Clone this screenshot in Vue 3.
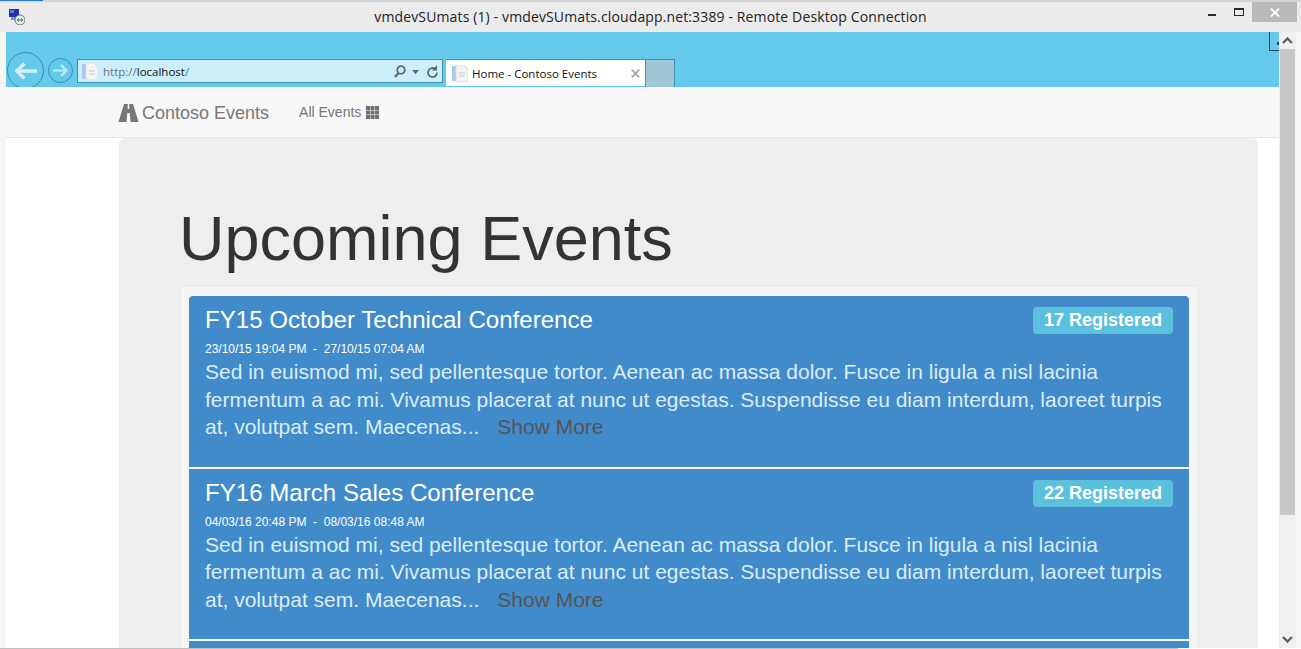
<script setup>
const events = [
  { id: 1, title: 'FY15 October Technical Conference', registered: 17, start: '23/10/15 19:04 PM', end: '27/10/15 07:04 AM' },
  { id: 2, title: 'FY16 March Sales Conference', registered: 22, start: '04/03/16 20:48 PM', end: '08/03/16 08:48 AM' },
  { id: 3, title: '', registered: null, start: '', end: '' }
]
const blurb = 'Sed in euismod mi, sed pellentesque tortor. Aenean ac massa dolor. Fusce in ligula a nisl lacinia fermentum a ac mi. Vivamus placerat at nunc ut egestas. Suspendisse eu diam interdum, laoreet turpis at, volutpat sem. Maecenas...'
</script>

<template>
  <div class="window">
    <div class="topline"><span class="topline-blue"></span></div>

    <div class="titlebar">
      <svg class="rdp-icon" width="16" height="16" viewBox="0 0 16 16">
        <rect x="0" y="0" width="10" height="8" fill="#2030b0" />
        <rect x="1" y="1" width="4" height="3" fill="#5a7ae0" />
        <rect x="2" y="8" width="8" height="3" fill="#8890a8" />
        <circle cx="11" cy="11" r="5" fill="#e8e8e8" stroke="#777" />
        <path d="M8.500 11h5M9.500 9.500l-1 1.500 1 1.500M12.500 9.500l1 1.500-1 1.500" stroke="#1c8a2c" fill="none" />
      </svg>
      <div class="title-text">vmdevSUmats (1) - vmdevSUmats.cloudapp.net:3389 - Remote Desktop Connection</div>
      <div class="win-controls">
        <span class="ctl-min"></span>
        <span class="ctl-max"></span>
        <span class="ctl-close">
          <svg width="10" height="9" viewBox="0 0 10 9"><path d="M1 .5l8 8M9 .5l-8 8" stroke="#fff" stroke-width="1.800" /></svg>
        </span>
      </div>
    </div>

    <div class="client">
      <div class="viewport">
        <div class="chrome">
          <span class="corner-mark"></span>
          <div class="nav-btns">
            <div class="nav-back">
              <svg width="23" height="18" viewBox="0 0 23 18"><path d="M10.500 1.500L3 9l7.500 7.500M3 9h20" stroke="#d3eff9" stroke-width="3.600" fill="none" /></svg>
            </div>
            <div class="nav-forward">
              <svg width="15" height="13" viewBox="0 0 15 13"><path d="M8 1l5.500 5.500L8 12M13 6.500H0" stroke="#c4e8f5" stroke-width="2.200" fill="none" /></svg>
            </div>
          </div>
          <div class="address">
            <svg class="page-icon" width="16" height="17" viewBox="0 0 16 17">
              <rect x="0" y="1" width="5" height="15" fill="#a9c8ec" />
              <path d="M4 0h8l4 4v13H4z" fill="#f4f4f4" stroke="#d6d6d6" />
              <path d="M7 8h6M7 11h6" stroke="#c8c8c8" />
            </svg>
            <span class="url"><span class="dim">http://</span>localhost<span class="dim">/</span></span>
            <svg class="addr-tool" width="45" height="13" viewBox="0 0 45 13">
              <circle cx="7" cy="5" r="3.800" fill="none" stroke="#5b6a72" stroke-width="1.800" />
              <path d="M4.500 8l-3.500 4" stroke="#5b6a72" stroke-width="2.200" />
              <path d="M18 5h7l-3.500 4z" fill="#5b6a72" />
              <path d="M43 7.500a4.500 4.500 0 1 1-2-3.700" fill="none" stroke="#5b6a72" stroke-width="1.800" />
              <path d="M43 0v5.500h-5z" fill="#5b6a72" />
            </svg>
          </div>
          <div class="tab">
            <svg class="page-icon" width="16" height="17" viewBox="0 0 16 17">
              <rect x="0" y="1" width="5" height="15" fill="#a9c8ec" />
              <path d="M4 0h8l4 4v13H4z" fill="#f4f4f4" stroke="#d6d6d6" />
              <path d="M7 8h6M7 11h6" stroke="#c8c8c8" />
            </svg>
            <span class="tab-label">Home - Contoso Events</span>
            <svg class="tab-close" width="9" height="9" viewBox="0 0 9 9"><path d="M.7.7l7.600 7.600M8.300.7L.7 8.300" stroke="#a8a8a8" stroke-width="1.800" /></svg>
          </div>
          <div class="new-tab"></div>
        </div>

        <nav class="navbar">
          <a class="brand">
            <svg width="21" height="18" viewBox="0 0 20 18">
              <path fill-rule="evenodd" d="M5.500 0H14.500L20 18H0zM9.300 0L9.100 5H10.900L10.700 0zM8.800 9L8 18H12L11.200 9z" fill="#777" />
            </svg>
            <span>Contoso Events</span>
          </a>
          <a class="nav-link">
            <span>All Events</span>
            <svg width="13" height="13" viewBox="0 0 13 13" fill="#6f6f6f">
              <rect x="0" y="0" width="4" height="4" /><rect x="4.500" y="0" width="4" height="4" /><rect x="9" y="0" width="4" height="4" />
              <rect x="0" y="4.500" width="4" height="4" /><rect x="4.500" y="4.500" width="4" height="4" /><rect x="9" y="4.500" width="4" height="4" />
              <rect x="0" y="9" width="4" height="4" /><rect x="4.500" y="9" width="4" height="4" /><rect x="9" y="9" width="4" height="4" />
            </svg>
          </a>
        </nav>

        <main class="page">
          <section class="jumbotron">
            <h1>Upcoming Events</h1>
            <div class="well">
              <article v-for="ev in events" :key="ev.id" class="event">
                <template v-if="ev.title">
                  <div class="event-head">
                    <h3>{{ ev.title }}</h3>
                    <span class="badge">{{ ev.registered }} Registered</span>
                  </div>
                  <div class="dates">{{ ev.start }}&nbsp; - &nbsp;{{ ev.end }}</div>
                  <p class="blurb">{{ blurb }}<a class="more">Show More</a></p>
                </template>
              </article>
            </div>
          </section>
        </main>
      </div>

      <div class="scrollbar">
        <div class="scroll-btn">
          <svg width="11" height="7" viewBox="0 0 11 7"><path d="M1 6l4.500-4.500L10 6" stroke="#606060" stroke-width="2.400" fill="none" /></svg>
        </div>
        <div class="scroll-thumb"></div>
        <div class="scroll-rest"></div>
        <div class="scroll-btn">
          <svg width="11" height="7" viewBox="0 0 11 7"><path d="M1 1l4.500 4.500L10 1" stroke="#606060" stroke-width="2.400" fill="none" /></svg>
        </div>
      </div>
    </div>

    <div class="bottomline"><span class="bottomline-grey"></span></div>
  </div>
</template>

<style>
html, body { margin: 0; padding: 0; overflow: hidden; }
</style>

<style scoped>
.window {
  width: 1301px;
  height: 649px;
  display: flex;
  flex-direction: column;
  background: #f6f6f6;
  overflow: hidden;
  font-family: "Liberation Sans", Arial, sans-serif;
}

.topline {
  height: 2px;
  flex: none;
  background: #d4d4d4;
}
.topline-blue {
  display: block;
  width: 43px;
  height: 1px;
  background: #2b7cd3;
}

.titlebar {
  height: 30px;
  flex: none;
  display: flex;
  align-items: center;
  position: relative;
  background: #ebebeb;
}
.rdp-icon {
  margin-left: 9px;
  flex: none;
}
.title-text {
  position: absolute;
  left: 0;
  right: 0;
  top: 5px;
  text-align: center;
  font-family: "Open Sans", "Noto Sans", sans-serif;
  font-size: 14px;
  letter-spacing: 0.13px;
  line-height: 20px;
  color: #222;
}
.win-controls {
  margin-left: auto;
  margin-right: 4px;
  display: flex;
  align-items: flex-start;
  align-self: flex-start;
}
.ctl-min {
  width: 8px;
  height: 2px;
  background: #2a2a2a;
  margin: 12px 18px 0 0;
}
.ctl-max {
  width: 8px;
  height: 5px;
  border: 1px solid #2a2a2a;
  border-top-width: 2px;
  margin: 6px 8px 0 0;
}
.ctl-close {
  width: 45px;
  height: 20px;
  background: #b9b9b9;
  display: flex;
  align-items: center;
  justify-content: center;
}

.client {
  flex: 1;
  min-height: 0;
  display: flex;
  margin: 0 5px 0 6px;
  background: #fff;
}
.viewport {
  flex: 1;
  min-width: 0;
  display: flex;
  flex-direction: column;
}

.chrome {
  height: 55px;
  flex: none;
  background: #64c9eb;
  display: flex;
  align-items: flex-end;
  position: relative;
  overflow: hidden;
}
.corner-mark {
  position: absolute;
  top: 0;
  right: 0;
  width: 9px;
  height: 18px;
  border-left: 1px solid #27435a;
  border-bottom: 1px solid #27435a;
}
.corner-mark::after {
  content: "";
  position: absolute;
  right: 0;
  top: 10px;
  width: 2px;
  height: 3px;
  background: #27435a;
}
.nav-btns {
  display: flex;
  align-items: center;
  height: 37px;
  margin: 0 4px -2px 1px;
  gap: 4px;
}
.nav-back {
  width: 35px;
  height: 35px;
  border: 1px solid #3a8ea8;
  border-radius: 50%;
  display: flex;
  align-items: center;
  justify-content: center;
}
.nav-forward {
  width: 23px;
  height: 23px;
  border: 1px solid #3a8ea8;
  border-radius: 50%;
  display: flex;
  align-items: center;
  justify-content: center;
  margin-top: -1px;
}
.address {
  width: 366px;
  height: 24px;
  box-sizing: border-box;
  border: 1px solid #3f93ad;
  background: #cbeef9;
  display: flex;
  align-items: center;
  margin-bottom: 4px;
  padding: 0 3px 0 4px;
}
.page-icon {
  flex: none;
}
.url {
  margin-left: 5px;
  font-family: "Open Sans", "Noto Sans", sans-serif;
  font-size: 11.5px;
  color: #111;
}
.dim {
  color: #66757c;
}
.addr-tool {
  margin-left: auto;
}
.tab {
  width: 199px;
  height: 28px;
  box-sizing: border-box;
  margin-left: 3px;
  background: #fff;
  border-bottom: 1px solid #64c9eb;
  border-top: 1px solid #3f93ad;
  display: flex;
  align-items: center;
  padding: 0 5px 0 6px;
}
.tab-label {
  margin-left: 4px;
  font-family: "Open Sans", "Noto Sans", sans-serif;
  font-size: 11.5px;
  color: #111;
}
.tab-close {
  margin-left: auto;
}
.new-tab {
  width: 30px;
  height: 28px;
  box-sizing: border-box;
  background: #a0c5d5;
  border: 1px solid #3f93ad;
  border-bottom: 0;
}

.navbar {
  height: 51px;
  flex: none;
  box-sizing: border-box;
  background: #f8f8f8;
  border-bottom: 1px solid #e7e7e7;
  display: flex;
  align-items: center;
  padding-left: 112px;
}
.brand {
  display: flex;
  align-items: center;
  gap: 3px;
  font-size: 18px;
  color: #777;
  margin-top: 2px;
}
.nav-link {
  display: flex;
  align-items: center;
  gap: 5px;
  margin-left: 30px;
  font-size: 14px;
  color: #777;
}

.page {
  flex: 1;
  min-height: 0;
  overflow: hidden;
  background: #fff;
  padding-left: 113px;
}
.jumbotron {
  width: 1139px;
  min-height: 100%;
  box-sizing: border-box;
  background: #eee;
  border-radius: 6px;
  padding: 0 59px 0 61px;
}
h1 {
  margin: 0 0 12px -1px;
  padding-top: 66px;
  font-size: 63px;
  font-weight: 400;
  line-height: 69px;
  color: #333;
}
.well {
  background: #f5f5f5;
  border: 1px solid #e8e8e8;
  border-radius: 4px;
  padding: 10px 9px 0 8px;
  box-shadow: inset 0 1px 1px rgba(0, 0, 0, 0.05);
}
.event {
  height: 170.5px;
  box-sizing: border-box;
  background: #428bca;
  padding: 11px 16px 0;
  margin-bottom: 2px;
  border-radius: 4px 4px 0 0;
  box-shadow: 0 2px 0 #fff;
}
.event + .event {
  border-radius: 0;
}
.event-head {
  display: flex;
  justify-content: space-between;
  align-items: flex-start;
}
h3 {
  margin: 0;
  font-size: 24.1px;
  font-weight: 400;
  line-height: 26px;
  color: #fff;
}
.badge {
  box-sizing: border-box;
  height: 27px;
  width: 140px;
  text-align: center;
  background: #5bc0de;
  border-radius: 4px;
  font-size: 18px;
  font-weight: 700;
  line-height: 26px;
  color: #fff;
}
.dates {
  margin-top: 7px;
  font-size: 12px;
  line-height: 16px;
  color: #fff;
}
.blurb {
  margin: 1px 0 0;
  font-size: 21px;
  line-height: 27.5px;
  color: #d9edf7;
}
.more {
  margin-left: 18px;
  color: #555;
}

.scrollbar {
  width: 17px;
  flex: none;
  background: #f0f0f0;
  display: flex;
  flex-direction: column;
}
.scroll-btn {
  height: 17px;
  flex: none;
  display: flex;
  align-items: center;
  justify-content: center;
}
.scroll-thumb {
  height: 466px;
  flex: none;
  margin: 0 1px;
  background: #c8c8c8;
}
.scroll-rest {
  flex: 1;
}

.bottomline {
  height: 1px;
  flex: none;
  background: #fff;
}
.bottomline-grey {
  display: block;
  width: 1178px;
  height: 1px;
  background: #c0c0c0;
}
</style>
